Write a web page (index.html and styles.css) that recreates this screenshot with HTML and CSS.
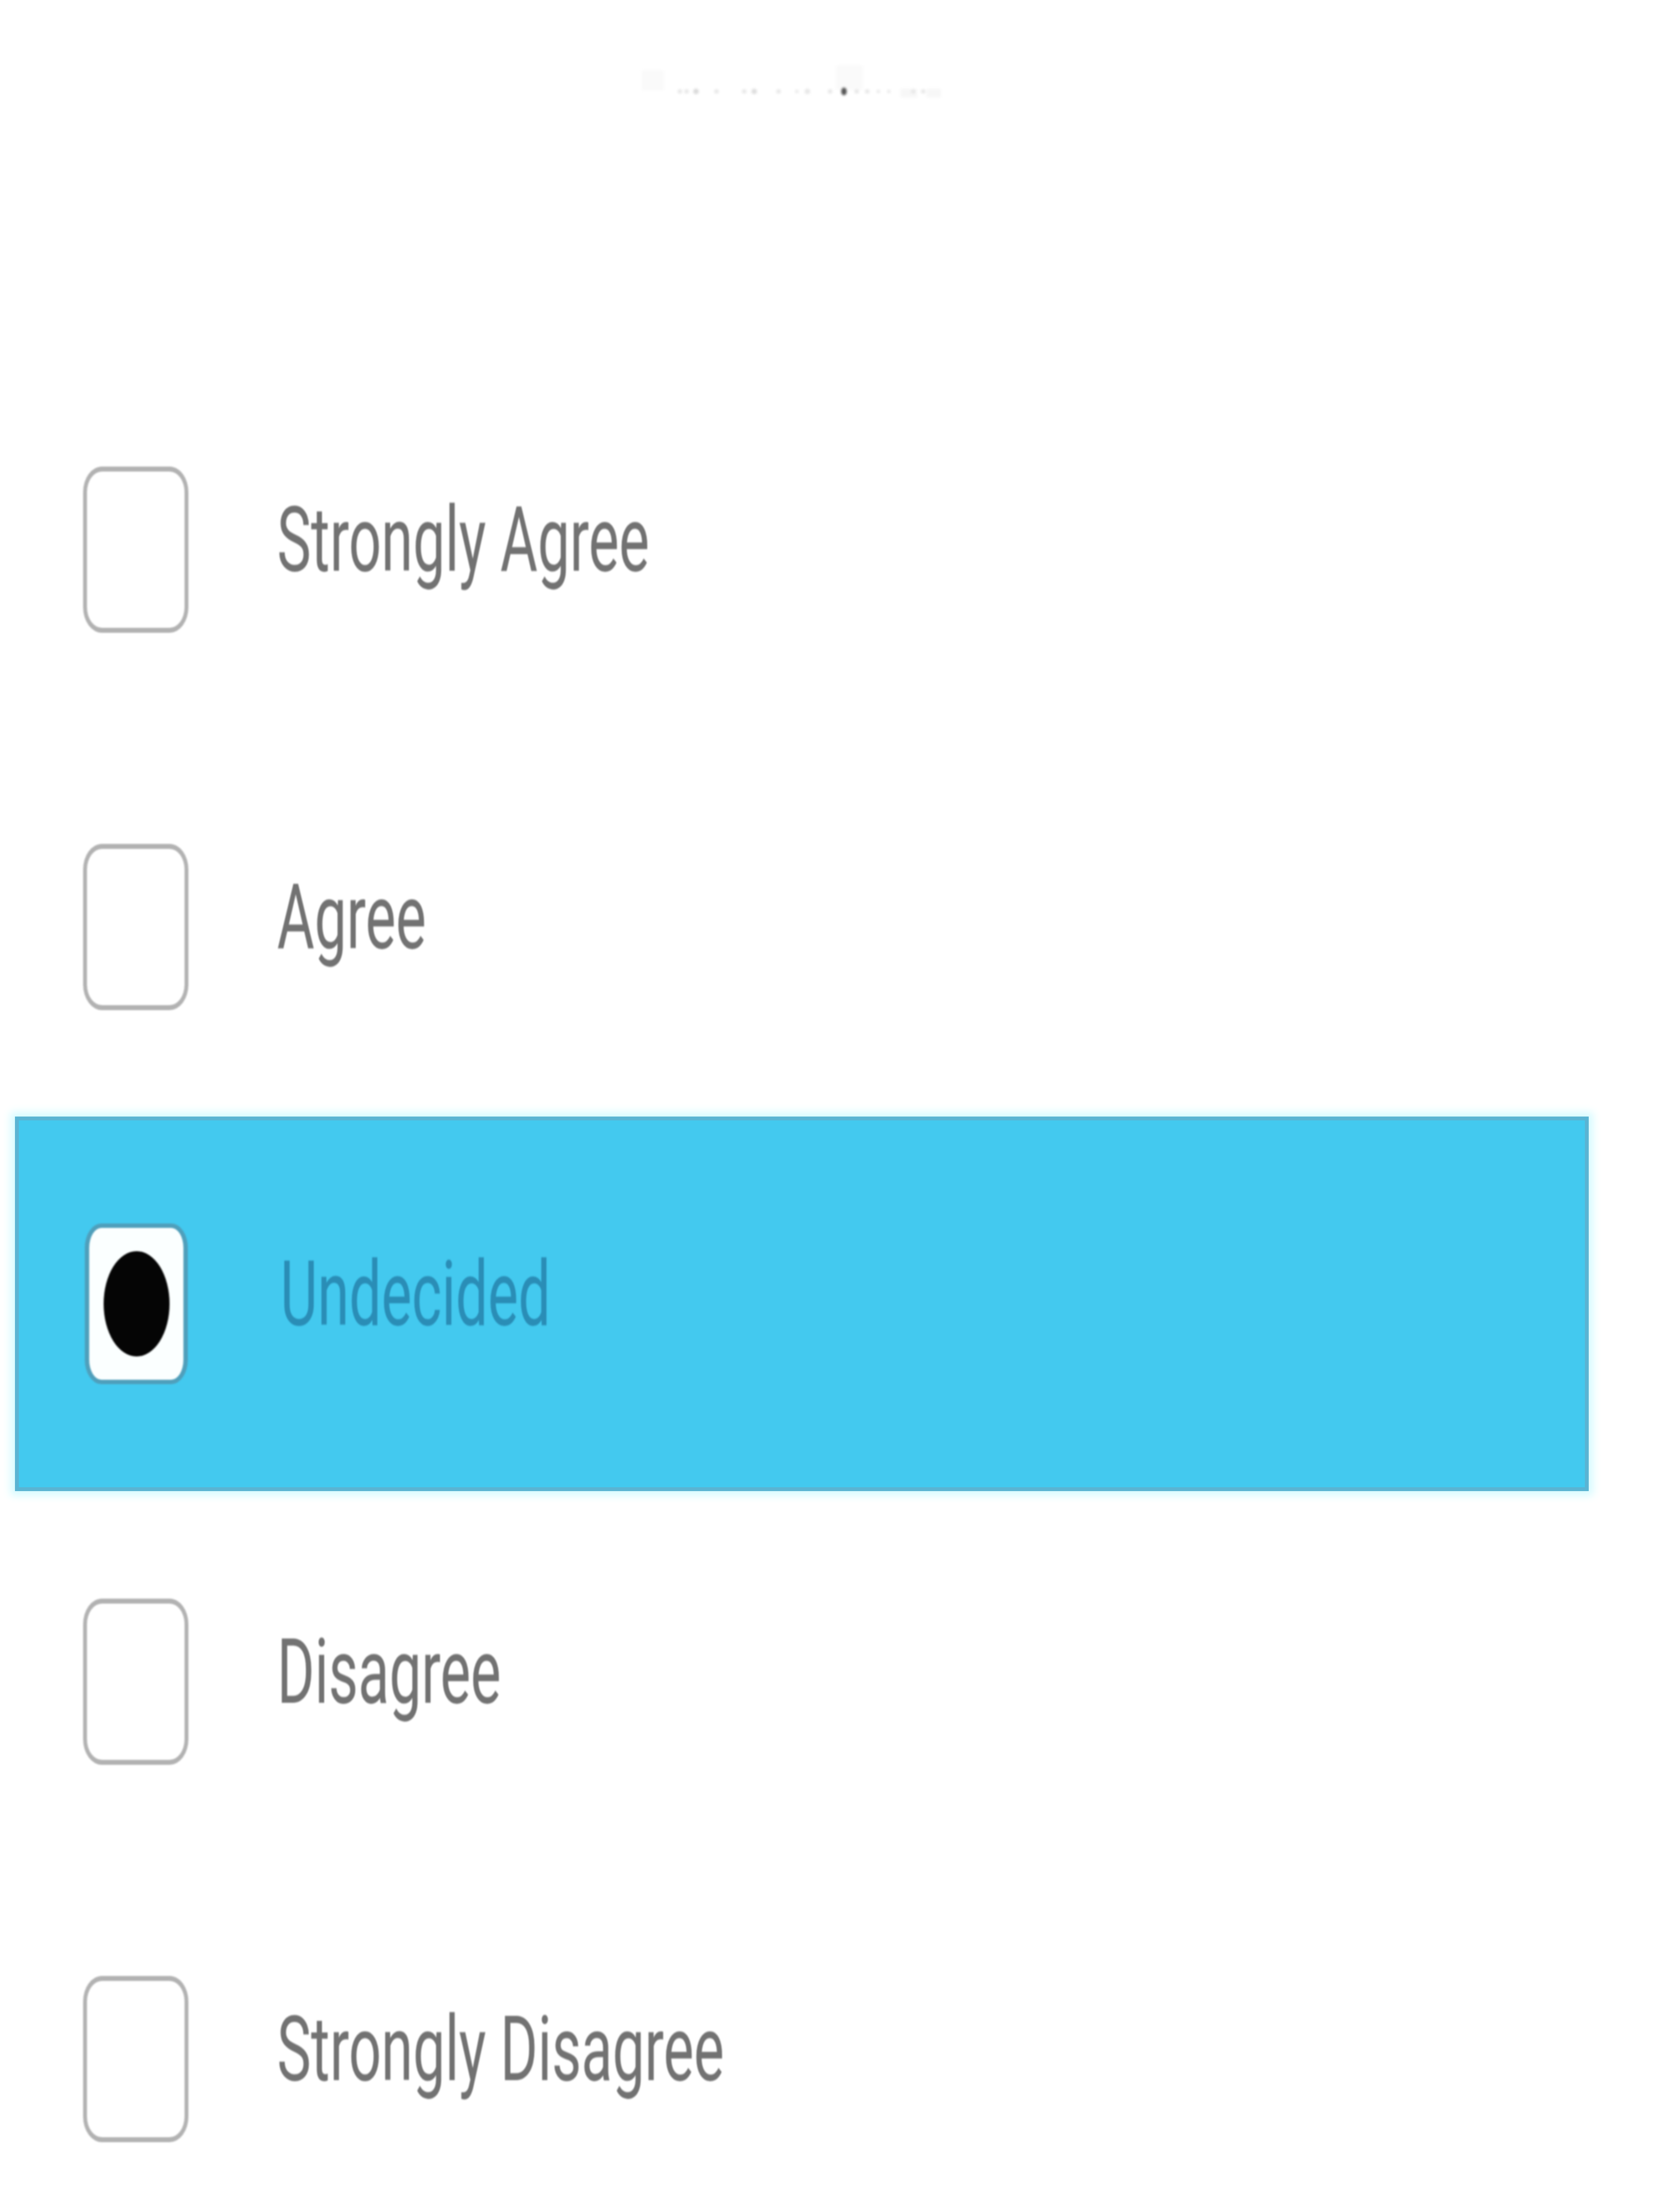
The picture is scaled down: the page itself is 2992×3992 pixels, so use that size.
FILE: index.html
```html
<!DOCTYPE html>
<html lang="en">
<head>
<meta charset="utf-8">
<title>Survey options</title>
<link rel="stylesheet" href="styles.css">
</head>
<body>
<div class="page">
  <header class="top">
    <svg class="ghost" width="2992" height="240" viewBox="0 0 2992 240" aria-hidden="true">
      <rect x="1158" y="127" width="40" height="36" fill="#fafafa"/>
      <rect x="1509" y="118" width="48" height="44" fill="#fafafa"/>
      <rect x="1625" y="160" width="30" height="16" fill="#f7f7f7"/>
      <rect x="1672" y="160" width="26" height="16" fill="#f7f7f7"/>
      <g fill="#e8e8e8">
        <circle cx="1227" cy="165" r="4"/>
        <circle cx="1239" cy="165" r="4"/>
        <circle cx="1256" cy="165" r="5" fill="#dadada"/>
        <circle cx="1293" cy="165" r="4"/>
        <circle cx="1343" cy="165" r="4"/>
        <circle cx="1361" cy="165" r="5" fill="#dedede"/>
        <circle cx="1405" cy="165" r="4"/>
        <circle cx="1438" cy="165" r="3"/>
        <circle cx="1457" cy="165" r="5"/>
        <circle cx="1498" cy="165" r="4"/>
        <circle cx="1546" cy="165" r="4"/>
        <circle cx="1565" cy="165" r="4"/>
        <circle cx="1585" cy="165" r="3"/>
        <circle cx="1604" cy="165" r="3"/>
        <circle cx="1648" cy="165" r="4"/>
        <circle cx="1666" cy="165" r="4"/>
      </g>
      <ellipse cx="1523" cy="165" rx="5" ry="7" fill="#555"/>
    </svg>
  </header>

  <ul class="options">
    <li class="option">
      <span class="box"></span>
      <span class="label">Strongly Agree</span>
    </li>
    <li class="option">
      <span class="box"></span>
      <span class="label">Agree</span>
    </li>
    <li class="option selected">
      <span class="box"><span class="dot"></span></span>
      <span class="label">Undecided</span>
    </li>
    <li class="option">
      <span class="box"></span>
      <span class="label">Disagree</span>
    </li>
    <li class="option">
      <span class="box"></span>
      <span class="label">Strongly Disagree</span>
    </li>
  </ul>
</div>
</body>
</html>
```

FILE: styles.css
```css
html, body {
  margin: 0;
  padding: 0;
  background: #ffffff;
}

.page {
  width: 2992px;
  height: 3992px;
  overflow: hidden;
  background: #ffffff;
  font-family: Roboto, "Liberation Sans", sans-serif;
}

.top {
  height: 651px;
}

.ghost {
  display: block;
  filter: blur(2px);
}

.options {
  list-style: none;
  margin: 0;
  padding: 0;
}

.option {
  display: flex;
  align-items: center;
  height: 681px;
  width: 2840px;
  margin-left: 27px;
  box-sizing: border-box;
}

.box {
  flex: none;
  display: flex;
  align-items: center;
  justify-content: center;
  width: 190px;
  height: 300px;
  margin-left: 123px;
  box-sizing: border-box;
  border: 7px solid #b2b2b2;
  border-top-width: 9px;
  border-bottom-width: 9px;
  border-radius: 34px / 46px;
  background: #ffffff;
  filter: blur(1.6px);
}

.label {
  display: block;
  margin-left: 160px;
  padding-bottom: 36px;
  font-size: 164px;
  line-height: 1;
  color: #727272;
  white-space: nowrap;
  transform: scaleX(0.63);
  transform-origin: left center;
  filter: blur(1.4px);
}

.selected {
  height: 676px;
  margin-top: 2px;
  margin-bottom: 3px;
  background: #43c9ef;
  border: 7px solid #5ab4d3;
  box-shadow: 0 0 14px 8px #d6fbff;
}

.selected .box {
  width: 186px;
  height: 290px;
  margin-left: 119px;
  border-color: #4f9fbb;
  border-width: 8px;
  border-radius: 30px / 44px;
  background: #fbffff;
}

.selected .label {
  margin-left: 167px;
  color: #2a8db6;
}

.dot {
  display: block;
  width: 119px;
  height: 190px;
  border-radius: 50%;
  background: #050505;
}
```
